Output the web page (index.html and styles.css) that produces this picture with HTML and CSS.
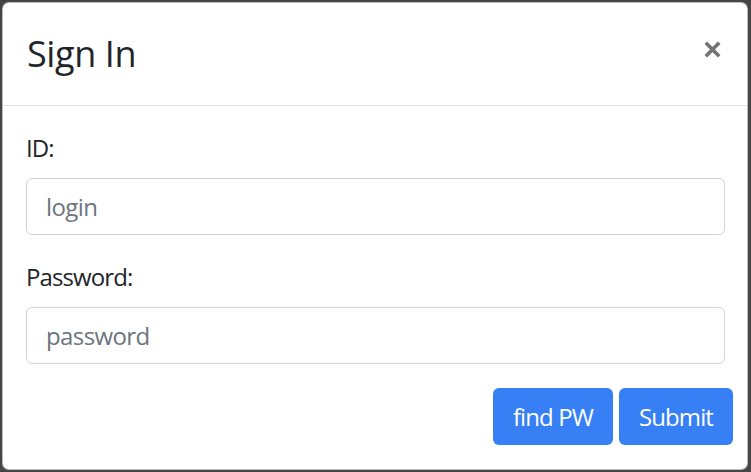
FILE: index.html
```html
<!DOCTYPE html>
<html lang="en">
<head>
<meta charset="utf-8">
<title>Sign In</title>
<link rel="stylesheet" href="styles.css">
</head>
<body>
<div class="modal">
  <div class="modal-header">
    <h4 class="modal-title">Sign In</h4>
    <button class="close" type="button" aria-label="Close">
      <svg width="17" height="17" viewBox="0 0 17 17"><path d="M1.8 1.8 L15.2 15.2 M15.2 1.8 L1.8 15.2" stroke="#737373" stroke-width="3.6" stroke-linecap="butt"/></svg>
    </button>
  </div>
  <div class="modal-body">
    <div class="form-group">
      <label class="label" for="login">ID:</label>
      <input class="form-control" id="login" type="text" placeholder="login">
    </div>
    <div class="form-group last">
      <label class="label" for="pw">Password:</label>
      <input class="form-control" id="pw" type="password" placeholder="password">
    </div>
  </div>
  <div class="modal-footer">
    <button class="btn" type="button">find PW</button>
    <button class="btn" type="submit">Submit</button>
  </div>
</div>
</body>
</html>
```

FILE: styles.css
```css
html, body {
  margin: 0;
  padding: 0;
}
body {
  background: #454545;
  padding: 2px 3px 2px 2px;
  width: 751px;
  height: 472px;
  box-sizing: border-box;
  font-family: "Open Sans", "Noto Sans", sans-serif;
  color: #212529;
}
.modal {
  width: 746px;
  height: 468px;
  box-sizing: border-box;
  background: #fff;
  border: 1px solid rgba(0,0,0,0.25);
  border-radius: 7px;
  display: flex;
  flex-direction: column;
}
.modal-header {
  display: flex;
  justify-content: space-between;
  align-items: flex-start;
  padding: 24px 26px 24px 24px;
  border-bottom: 1px solid #dee2e6;
}
.modal-title {
  margin: 0;
  font-size: 36px;
  font-weight: 500;
  letter-spacing: -0.4px;
  line-height: 54px;
}
.close {
  margin-top: 14px;
  padding: 0;
  border: 0;
  background: transparent;
  width: 17px;
  height: 17px;
  display: flex;
}
.modal-body {
  padding: 24px 22px 0 23px;
}
.form-group {
  display: flex;
  flex-direction: column;
  margin-bottom: 24px;
}
.label {
  font-size: 24px;
  line-height: 36px;
  letter-spacing: -0.9px;
  margin-bottom: 12px;
}
.form-control {
  height: 57px;
  box-sizing: border-box;
  border: 1px solid #ced4da;
  border-radius: 6px;
  padding: 0 19px;
  font-family: inherit;
  font-size: 24px;
  letter-spacing: -0.6px;
  color: #495057;
  background: #fff;
}
.form-control::placeholder {
  color: #6c757d;
  opacity: 1;
}
.modal-footer {
  display: flex;
  justify-content: flex-end;
  gap: 6px;
  padding: 0 14px 0 0;
}
.btn {
  height: 57px;
  padding: 0 20px;
  border: 0;
  border-radius: 6px;
  background: #377ff5;
  color: #fff;
  font-family: inherit;
  font-size: 24px;
  letter-spacing: -0.9px;
  line-height: 36px;
}
```
